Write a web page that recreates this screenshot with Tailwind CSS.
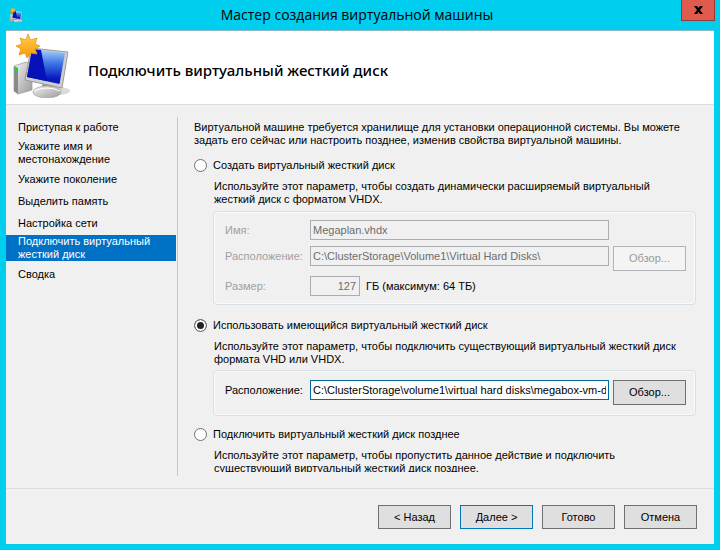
<!DOCTYPE html>
<html lang="ru">
  <head>
    <meta charset="UTF-8" />
    <meta name="viewport" content="width=device-width, initial-scale=1.0" />
    <title>Мастер создания виртуальной машины</title>
    <script src="https://cdn.jsdelivr.net/npm/@tailwindcss/browser@4"></script>
  </head>
  <body class="flex flex-col h-screen bg-[#00ceee] px-1.5 pb-1.5 font-['Liberation_Sans',Arial,sans-serif] text-[11px] leading-[13px] text-black overflow-hidden">

    <!-- Title bar -->
    <header class="relative flex items-center h-[30px] shrink-0">
      <svg class="ml-[3px] w-[15px] h-4" viewBox="0 0 64 64" aria-hidden="true"><use href="#vm-icon" /></svg>
      <h1 class="flex-1 pr-6 text-center font-['Open_Sans',sans-serif] text-[14px] leading-5">Мастер создания виртуальной машины</h1>
      <button type="button" aria-label="Закрыть" class="absolute top-0 -right-px w-[34px] h-[21px] flex items-center justify-center bg-[#e05a4e] border border-t-0 border-[#8f3a3a]">
        <svg class="w-[9px] h-[8px]" viewBox="0 0 9 8"><path d="M0 0h3l1.500 2L6 0h3L6 4l3 4H6L4.500 6 3 8H0l3-4z" fill="#000" /></svg>
      </button>
    </header>

    <!-- Page heading -->
    <div class="flex items-center h-[75px] shrink-0 bg-white border-t border-b border-t-[#8fb9c4] border-b-[#dcdcdc]">
      <svg class="ml-1.5 mb-1 w-16 h-16 shrink-0" viewBox="0 0 64 64" aria-hidden="true">
        <defs>
          <linearGradient id="screen" x1="0" y1="0" x2="0" y2="1">
            <stop offset="0" stop-color="#a9d6fb" />
            <stop offset="0.400" stop-color="#3f78e6" />
            <stop offset="0.850" stop-color="#0818c0" />
          </linearGradient>
          <linearGradient id="metal" x1="0" y1="0" x2="1" y2="1">
            <stop offset="0" stop-color="#f2f2f2" />
            <stop offset="1" stop-color="#9a9a9a" />
          </linearGradient>
          <linearGradient id="star" x1="0" y1="0" x2="0" y2="1">
            <stop offset="0" stop-color="#ffcf50" />
            <stop offset="1" stop-color="#f79a00" />
          </linearGradient>
          <symbol id="vm-icon" viewBox="0 0 64 64">
            <ellipse cx="46" cy="57" rx="12" ry="4" fill="#dadada" />
            <path d="M2 32l12-4 6 3v25L6 60l-4-3z" fill="url(#metal)" stroke="#999" stroke-width="0.700" />
            <path d="M2 32l4 2v26l-4-3z" fill="#8a8a8a" />
            <path d="M2.500 33l3 1.500v4l-3-1.500z" fill="#23d23a" />
            <path d="M31 47l10 2 1 8H29z" fill="#9d9d9d" />
            <ellipse cx="35" cy="58" rx="14" ry="6" fill="url(#metal)" stroke="#a5a5a5" stroke-width="0.700" />
            <path d="M22 57q13-6 26 0" fill="none" stroke="#fff" stroke-width="1" />
            <path d="M19 14l37 4-6 36-37-8z" fill="#cfcfcf" stroke="#8a8a8a" stroke-width="0.800" />
            <path d="M20 15l33 4-5.500 31L15 43z" fill="url(#screen)" />
            <path d="M20 15l9 1 6 31-20-4z" fill="#0612b8" />
            <path d="M16 0l2.500 6L25 4l-2 6 5 2-5 3 2 5-6-1-4 5-2-5-6 2 2-6-5-3 6-2-2-6 6 2z" fill="url(#star)" stroke="#ea9612" stroke-width="0.800" />
          </symbol>
        </defs>
        <use href="#vm-icon" />
      </svg>
      <h2 class="ml-3 pt-1 font-['Noto_Sans',sans-serif] text-[15px] leading-5 font-medium">Подключить виртуальный жесткий диск</h2>
    </div>

    <div class="flex flex-col flex-1 min-h-0 bg-[#f0f0f0]">
      <div class="flex flex-1 min-h-0 pt-3 pb-3">

        <!-- Wizard steps -->
        <nav class="w-[170px] shrink-0">
          <a href="#" class="block px-3 py-1 mb-px">Приступая к работе</a>
          <a href="#" class="block px-3 mt-0.5 mb-[3px]">Укажите имя и<br />местонахождение</a>
          <a href="#" class="block px-3 py-1 mb-px">Укажите поколение</a>
          <a href="#" class="block px-3 py-1 mb-px">Выделить память</a>
          <a href="#" class="block px-3 py-1 mb-px">Настройка сети</a>
          <a href="#" aria-current="step" class="block px-3 mb-[3px] bg-[#0072c6] text-white">Подключить виртуальный<br />жесткий диск</a>
          <a href="#" class="block px-3 py-1 mb-px">Сводка</a>
        </nav>

        <!-- Disk options -->
        <form class="flex-1 min-w-0 ml-px border-l border-[#c8c8c8] pl-4 pr-[18px]">
          <div class="h-full max-h-[355px] overflow-hidden pt-1">
            <p class="whitespace-nowrap">Виртуальной машине требуется хранилище для установки операционной системы. Вы можете<br />задать его сейчас или настроить позднее, изменив свойства виртуальной машины.</p>

            <div class="flex items-center gap-1.5 mt-3">
              <input type="radio" name="disk" id="diskNew" class="appearance-none w-[13px] h-[13px] rounded-full border border-[#707070] bg-white" />
              <label for="diskNew">Создать виртуальный жесткий диск</label>
            </div>
            <p class="mt-2 ml-5 whitespace-nowrap">Используйте этот параметр, чтобы создать динамически расширяемый виртуальный<br />жесткий диск с форматом VHDX.</p>

            <fieldset disabled class="ml-[19px] mt-[5px] pl-[11px] pr-[9px] pt-2 pb-2 border border-[#d5dfe5] rounded-sm shadow-[inset_0_0_0_1px_#fafafa] grid grid-cols-[81px_1fr_73px] gap-x-1 gap-y-0 text-[#a0a0a0]">
              <label for="diskName" class="h-[26px] leading-5">Имя:</label>
              <input id="diskName" type="text" value="Megaplan.vhdx" class="h-5 px-0.5 border border-[#abadb3] bg-[#f0f0f0] text-[#6d6d6d]" />
              <span></span>
              <label for="newPath" class="h-[30px] leading-5">Расположение:</label>
              <input id="newPath" type="text" value="C:\ClusterStorage\Volume1\Virtual Hard Disks\" class="h-5 px-0.5 border border-[#abadb3] bg-[#f0f0f0] text-[#6d6d6d]" />
              <button type="button" class="h-[25px] border border-[#b0b4b8] bg-[#f4f4f4] text-[#9a9a9a]">Обзор...</button>
              <label for="diskSize" class="leading-5">Размер:</label>
              <div class="flex items-center gap-1.5">
                <input id="diskSize" type="text" value="127" class="w-[50px] h-5 px-[3px] text-right border border-[#abadb3] bg-[#f0f0f0] text-[#6d6d6d]" />
                <span class="text-black">ГБ (максимум: 64 ТБ)</span>
              </div>
            </fieldset>

            <div class="flex items-center gap-1.5 mt-3.5">
              <input type="radio" name="disk" id="diskExisting" checked class="appearance-none w-[13px] h-[13px] rounded-full border border-[#707070] bg-white checked:bg-[#222] checked:shadow-[inset_0_0_0_2px_#fff]" />
              <label for="diskExisting">Использовать имеющийся виртуальный жесткий диск</label>
            </div>
            <p class="mt-2 ml-5 whitespace-nowrap">Используйте этот параметр, чтобы подключить существующий виртуальный жесткий диск<br />формата VHD или VHDX.</p>

            <fieldset class="ml-[19px] mt-1 pl-[11px] pr-[9px] pt-[9px] pb-2.5 border border-[#d5dfe5] rounded-sm shadow-[inset_0_0_0_1px_#fafafa] grid grid-cols-[81px_1fr_73px] gap-x-1">
              <label for="existingPath" class="leading-5">Расположение:</label>
              <input id="existingPath" type="text" value="C:\ClusterStorage\volume1\virtual hard disks\megabox-vm-di" class="h-5 px-0.5 border border-[#00699e] bg-white outline-none" />
              <button type="button" class="h-[25px] border border-[#707070] bg-[#dfdfdf]">Обзор...</button>
            </fieldset>

            <div class="flex items-center gap-1.5 mt-3">
              <input type="radio" name="disk" id="diskLater" class="appearance-none w-[13px] h-[13px] rounded-full border border-[#707070] bg-white" />
              <label for="diskLater">Подключить виртуальный жесткий диск позднее</label>
            </div>
            <p class="mt-2 ml-5 whitespace-nowrap">Используйте этот параметр, чтобы пропустить данное действие и подключить<br />существующий виртуальный жесткий диск позднее.</p>
          </div>
        </form>
      </div>

      <!-- Wizard buttons -->
      <footer class="flex justify-end gap-[9px] shrink-0 border-t border-[#dcdcdc] pt-4 pb-[15px] pr-[17px]">
        <button type="button" class="w-[73px] h-6 border border-[#707070] bg-[#dfdfdf]">&lt; Назад</button>
        <button type="button" class="w-[73px] h-6 border border-[#0078b8] bg-[#dfdfdf]">Далее &gt;</button>
        <button type="button" class="w-[73px] h-6 border border-[#707070] bg-[#dfdfdf]">Готово</button>
        <button type="button" class="w-[73px] h-6 border border-[#707070] bg-[#dfdfdf]">Отмена</button>
      </footer>
    </div>
  </body>
</html>
